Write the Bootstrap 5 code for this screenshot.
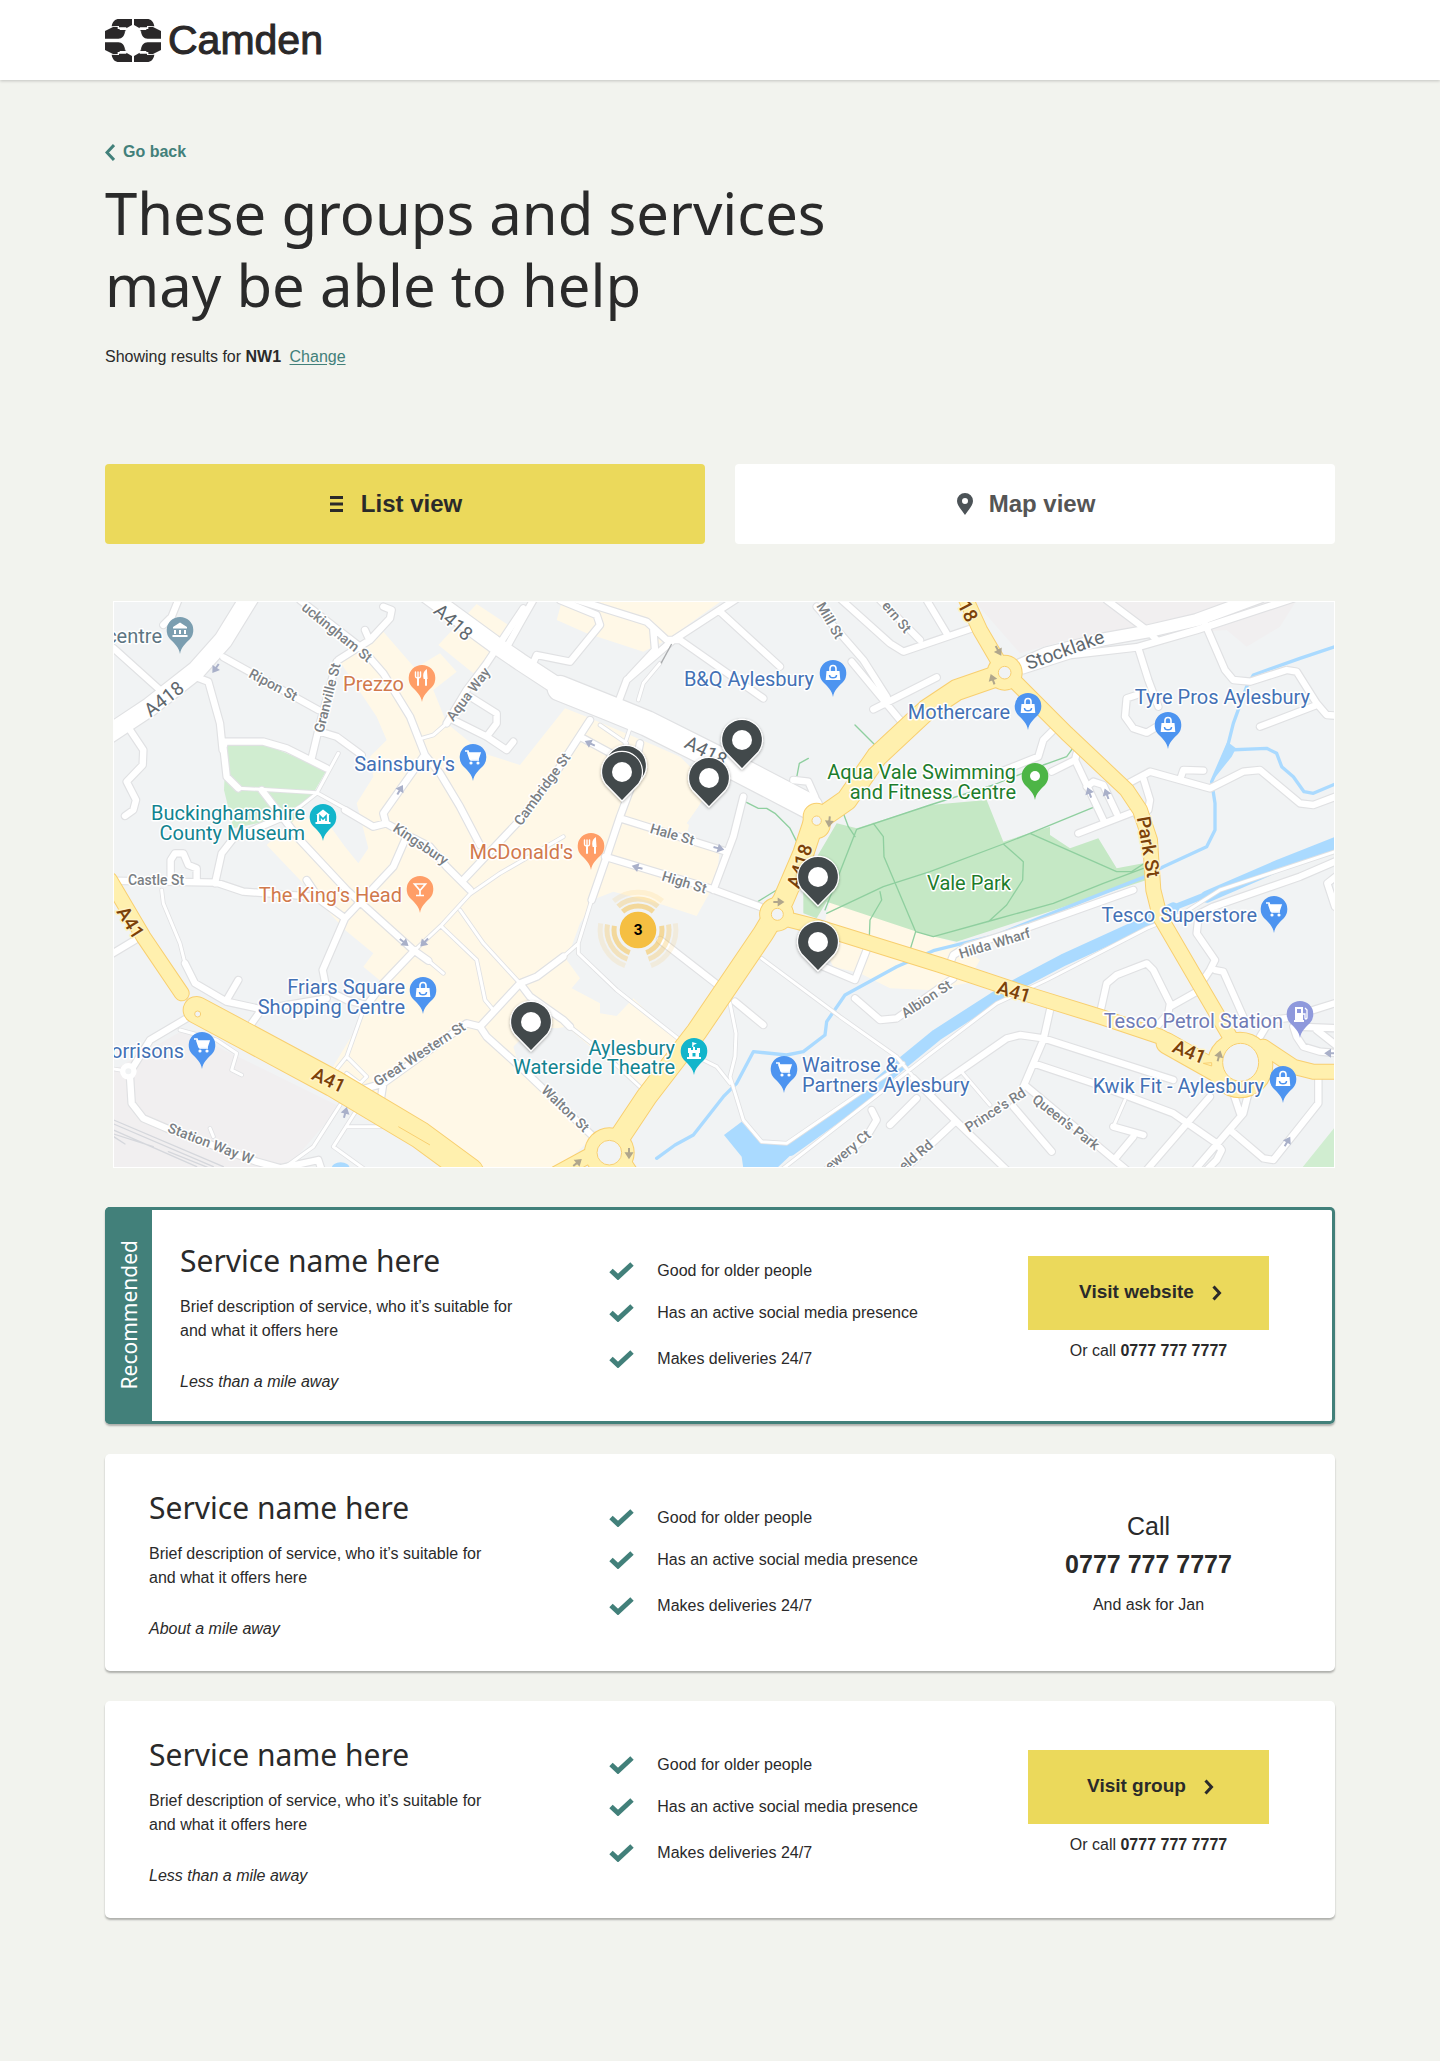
<!DOCTYPE html>
<html lang="en">
<head>
<meta charset="utf-8">
<meta name="viewport" content="width=device-width, initial-scale=1">
<title>Camden – groups and services</title>
<link rel="stylesheet" href="https://cdn.jsdelivr.net/npm/bootstrap@5.3.0/dist/css/bootstrap.min.css">
<style>
:root{--ink:#2a2a2a;--teal:#42807a;--sun:#ebd95b;--paper:#f2f3ee}
body{background:var(--paper);color:var(--ink);font-family:"Liberation Sans",Arial,sans-serif;font-size:16px;line-height:24px}
.container{max-width:1254px}
.site-head{height:80px;box-shadow:0 1px 3px rgba(0,0,0,.2)}
.brand{color:#2a2829;font-size:41px;line-height:48px;gap:7px;-webkit-text-stroke:1px #2a2829}
.brand svg{width:56px;height:43px}
.display-font{font-family:"Noto Sans","Open Sans",sans-serif;font-weight:400}
.page-body{padding-top:60px;padding-bottom:140px}
.back-link{color:var(--teal)}
.page-title{font-size:58px;line-height:72px;margin-top:9px}
.change-link{color:var(--teal);text-underline-offset:2px}
.view-tabs{gap:30px;margin-top:95px}
.view-tab{height:80px;border:0;border-radius:4px;font-size:24px;font-weight:700;padding-right:30px;background:#fff;color:#555}
.view-tab.active,.view-tab:hover,.view-tab.active:hover{background:var(--sun);color:var(--ink)}
.view-tab:not(.active):hover{background:#fff;color:#555}
.map-wrap{margin:57px 0 39px 8px;border:1px solid #fff}
.map-wrap svg{display:block;width:100%;height:auto;font-family:Roboto,sans-serif}
.results{gap:30px}
.service{background:#fff;border-radius:5px;box-shadow:0 2px 2px rgba(0,0,0,.28)}
.service.recommended{box-shadow:inset 0 0 0 3px var(--teal),0 2px 2px rgba(0,0,0,.28)}
.band{flex:0 0 47px;background:var(--teal);color:#fff;font-size:21px;border-radius:5px 0 0 5px}
.band span{writing-mode:vertical-rl;transform:rotate(180deg)}
.about{padding:36px 20px 30px 44px}
.recommended .about{padding-left:28px}
.service-name{font-size:30px;line-height:36px;margin-bottom:16px}
.blurb{margin-bottom:27px;max-width:350px}
.ticks{gap:18px;padding:52px 20px 0 0}
.ticks li{gap:23px}
.ticks li:last-child{margin-top:4px}
.ticks svg{width:25px;height:18px;flex:none}
.action{padding:49px 44px 20px}
.visit{height:74px;border-radius:0;background:var(--sun);color:var(--ink);font-size:19px;font-weight:700;gap:18px;padding-left:16px}
.visit:hover{background:#e0cd48;color:var(--ink)}
.or-call{margin:9px 0 0}
.call-lines{font-size:25px;line-height:38px;padding-top:4px;margin-bottom:10px}
@media(min-width:992px){
 .lead-col{flex:0 0 41%}
 .action{flex:0 0 241px;padding:49px 0 0;margin-right:66px}
}
/* map */
.rd{fill:none;stroke-linecap:round;stroke-linejoin:round}
.st{font-size:14px;font-weight:500;fill:#7b7f84;text-anchor:middle}
.rn{font-size:19px;fill:#5f686e;text-anchor:middle}
.yn{font-size:19px;font-weight:500;fill:#7b4109;text-anchor:middle}
.poi{font-size:20px}
.halo text{paint-order:stroke;stroke:#fff;stroke-width:3px;stroke-linejoin:round}
.halo .yn{stroke:#fff3c4}
.park-label{fill:#1d7d2c}.shop{fill:#4371b5}.eat{fill:#d1794c}.culture{fill:#128490}.civic{fill:#5d7582}.fuel{fill:#6f7bb5}
</style>
<script src="https://cdn.jsdelivr.net/npm/bootstrap@5.3.0/dist/js/bootstrap.bundle.min.js"></script>
</head>
<body>
<svg width="0" height="0" class="position-absolute" aria-hidden="true">
 <defs>
  <symbol id="tick" viewBox="0 0 25 18"><path d="M2 8.500l7 6.500L23 2" fill="none" stroke="#42807a" stroke-width="5"/></symbol>
  <symbol id="chev" viewBox="0 0 10 16"><path d="M1.500 1.500L7.500 8l-6 6.500" fill="none" stroke="currentColor" stroke-width="3"/></symbol>
  <g id="hand"><path d="M20 22C22 8 30 0 42 0H81V18L64 28V25H42V21Z"/><path d="M24 24H38V30H44V33H64L58 37H62V34H60V38C58 50 52 59 40 59H0V36Z"/></g>
 </defs>
</svg>

<header class="site-head bg-white">
 <div class="container h-100 d-flex align-items-center">
  <a href="#" class="brand d-flex align-items-center text-decoration-none">
   <svg viewBox="0 0 168 129" fill="#2a2829" aria-hidden="true"><use href="#hand"/><use href="#hand" transform="matrix(-1 0 0 1 168 0)"/><use href="#hand" transform="matrix(1 0 0 -1 0 129)"/><use href="#hand" transform="matrix(-1 0 0 -1 168 129)"/></svg>
   <span>Camden</span>
  </a>
 </div>
</header>

<main class="container page-body">
 <a href="#" class="back-link d-inline-flex align-items-center gap-2 fw-bold text-decoration-none"><svg width="10" height="17" viewBox="0 0 10 17" aria-hidden="true"><path d="M9 1L2 8.500 9 16" fill="none" stroke="currentColor" stroke-width="3"/></svg>Go back</a>
 <h1 class="page-title display-font mb-0">These groups and services<br>may be able to help</h1>
 <p class="mt-4 mb-0">Showing results for <strong>NW1</strong> <a href="#" class="change-link ms-1">Change</a></p>

 <div class="view-tabs d-flex">
  <button type="button" class="view-tab active btn flex-fill w-50 d-flex align-items-center justify-content-center"><svg class="me-3" width="15" height="16" viewBox="0 0 15 16" aria-hidden="true"><path d="M0 1.500h13M0 8h13M0 14.500h13" stroke="currentColor" stroke-width="3"/></svg>List view</button>
  <button type="button" class="view-tab btn flex-fill w-50 d-flex align-items-center justify-content-center"><svg class="me-3" width="16" height="22" viewBox="0 0 16 22" aria-hidden="true"><path fill="#4c5357" fill-rule="evenodd" d="M8 0a8 8 0 0 1 8 8c0 5-5 9-8 14C5 17 0 13 0 8a8 8 0 0 1 8-8zm0 5a3 3 0 1 0 0 6 3 3 0 0 0 0-6z"/></svg>Map view</button>
 </div>

 <div class="map-wrap">
 <svg viewBox="114 602 1220 565" role="img" aria-label="Map of services in Aylesbury">
  <defs>
   <path id="poi-pin" d="M0 24C-1 17-6 13-10 9A13.300 13.300 0 1 1 10 9C6 13 1 17 0 24Z"/>
   <g id="cart" fill="none" stroke="#fff" stroke-width="1.600"><path fill="#fff" d="M-5-4H7L5 2H-3Z"/><path d="M-8-6h3l3 9h8"/><circle cx="-2" cy="6" r=".8"/><circle cx="5" cy="6" r=".8"/></g>
   <g id="bag"><path fill="#fff" d="M-6.500-2h13l.8 9h-14.600z"/><path d="M-3-2v-2.500a3 3 0 0 1 6 0V-2" fill="none" stroke="#fff" stroke-width="1.600"/><path d="M-3.500 2a3.500 2.800 0 0 0 7 0" fill="none" stroke="#4d94f0" stroke-width="1.500"/></g>
   <g id="fork" stroke="#fff" stroke-width="2" fill="none" stroke-linecap="round"><path d="M-4 0V7M4 0V7"/><path d="M-6.500-6v4q0 2 2.500 2t2.500-2v-4M-4-6v5" stroke-width="1.400"/><path d="M4-7q-2.500 2-1.500 7h2z" fill="#fff"/></g>
   <g id="temple" fill="#fff"><path d="M-7-3L0-7.500 7-3v1.500H-7zM-6 0h2v4h-2zM-1 0h2v4h-2zM4 0h2v4h-2zM-7.500 5h15v2h-15z"/></g>
   <g id="spot"><path d="M0 29L-16.500 12A20.500 20.500 0 1 1 16.500 12Z" fill="#42484b" stroke="#fff" stroke-width="1.200"/><circle r="10" fill="#fff"/></g>
   <path id="way" d="M-16 0H6M0-8L12 0 0 8Z" stroke="currentColor" fill="currentColor" stroke-width="6"/>
   <filter id="drop" x="-30%" y="-30%" width="160%" height="170%"><feDropShadow dx="0" dy="1" stdDeviation="1.500" flood-opacity=".35"/></filter>

   <g id="lanes">
    <path d="M235 30L215 80 190 105M41 175L180 300M370 202L655 360M710 215L660 400 635 505M660 425L710 440 785 495M600 30L780 170 850 250 930 380 975 495M970 500L850 670 858 700 820 710 735 660M850 50L875 60 870 85 810 150 715 210M795 120L808 150M975 495L1020 550 1080 650 1140 765M290 262L325 275 360 400 368 480 375 455 490 455 560 475 680 535M370 470L380 560 415 595M485 600L600 750 740 900 940 1080 985 1112M90 420L130 480 128 525 80 575 108 630 100 660 75 678M35 872L350 878 430 905 640 920M345 880L365 790 400 745 540 685M212 870L212 810 225 790 250 790 265 825 290 835 290 870M858 700L930 740 990 770 1040 830 1110 900M915 750L880 830 735 985 668 1140 680 1200 740 1230 800 1245M620 870L660 930 735 985M945 1080L850 1180 790 1260M1270 55L1160 220 1100 300 1040 400"/>
    <path d="M1060 390L1160 440 1220 480 1240 455M1110 320L1190 370 1190 400 1160 440M1470 390L1360 560 1260 690 1090 870M1620 460L1590 600 1560 680 1520 800 1475 930M1390 1100L1310 1160 1260 1180 1140 1310 1100 1300 850 1480 780 1500M850 1480L842 1530M1140 1310L1160 1340 1260 1430 1480 1640M1260 1180L1290 1220 1390 1290 1410 1310M1560 685L1880 785M1515 800L1830 895 1980 950M1440 440L1560 505M1930 620L1900 740 1840 900M1400 20L1640 95 1700 150 1740 150M1920 20L1720 150 1580 270 1550 350M1660 120L1665 180 1590 260M1860 65L2040 230M1740 150L1990 325M1380 30L1490 75 1500 105 1410 215 1310 195 1290 240M1300 30L1260 100 1210 190M2150 50L2290 210 2360 320M2255 215L2400 390M2320 358L2510 262M2225 30L2370 160 2410 185 2630 110M2340 30L2460 150M2480 30L2540 130"/>
    <path d="M3020 30L3140 120 3170 150M3310 90L3375 240 3400 270 3450 275 3560 240 3590 245 3650 340 3680 375 3720 378M3480 410L3650 345M3115 175L3145 270 3175 350M3110 315L3080 325 3075 380 3100 415 3140 428 3170 410M2860 420L2830 450 2815 500 2690 550M2855 545L2925 510 2930 490M2925 510L3010 690M2960 590L2980 575 3010 585 3050 670M2935 730L3095 668M3085 580L3150 545 3330 595 3430 545 3480 540 3600 640 3640 645 3720 615M3240 570L3250 540 3310 542M3130 565L3150 630 3145 660 3110 675M3290 975L3340 950 3600 860 3720 808M3295 985L3290 1030 3345 1110 3330 1140 3310 1170M3345 1140L3370 1145 3430 1280M3720 850L3682 880 3705 950M2550 1120L2560 1095 2600 1070 2790 1010 3100 900"/>
    <path d="M3000 1270L3020 1180 3050 1155 3140 1120 3160 1140 3210 1240 3205 1270 3170 1310M3210 1250L3290 1205M2850 1260L2830 1350 2770 1490M2740 1550L2855 1685M2490 1510L2540 1470 2720 1345 2760 1335 2830 1345 3220 1470M2800 1420L2980 1480 3220 1570 3350 1660 3365 1680 3350 1710 3320 1740M2440 1465L2570 1595 2720 1740M2560 1600L2400 1750M2450 1525L2370 1605M2780 1490L3080 1740M3040 1610L3130 1635M3100 1640L3050 1700M3330 1520L3140 1740M3445 1510L3430 1570 3280 1745M3390 1620L3490 1705 3520 1710 3655 1540 3655 1460M3400 1510L3420 1570M3580 1310L3590 1340 3610 1370 3660 1385 3720 1390M3480 1340L3510 1290 3600 1280M3640 1260L3720 1235M3590 1310L3720 1315M3650 1320L3720 1375M1680 1050L1860 1190M1905 1235L1990 1305M2170 1130L2265 1170 2300 1080M2265 1225L2340 1290 2390 1285 2560 1165M2315 1560L2330 1590 2300 1640 2180 1740M2080 570L2125 575 2145 620 2155 660M105 1050L30 1095M260 1285L150 1350 100 1430M90 1460L95 1540 130 1585 200 1615 470 1715 560 1740M255 1120L285 1180 380 1235 485 1258 455 1300M380 1230L415 1170M485 1258L680 1225M540 1735L655 1710 665 1740"/>
   </g>
   <g id="alleys">
    <path d="M415 595L480 598 650 608 735 655M540 685L600 650 650 610 715 490M1040 400L1000 435 965 445M790 1260L740 1400 700 1450M945 1080L1025 1005 1110 912 1200 850 1390 740M1475 930L1435 1060 1390 1100M1435 1060L1435 1090 1550 1200 1740 1350M1410 1310L1500 1380 1630 1500M1500 405L1580 460M1590 415L1575 460M1680 220L1630 280 1615 330M2050 1735L2490 1392 2690 1240 2840 1170 3140 1015 3250 970 3360 900 3720 780M2580 1440L2670 1545M3075 1530L3040 1610M1985 1105L2220 1280 2390 1400 2440 1460M1890 1240L1908 1330 1905 1400 1890 1460 1930 1590 1985 1655 2060 1660 2410 1420M1810 1410L1850 1430 1890 1480M185 900L190 940 240 1060 255 1120M240 1320L350 1350 410 1390 395 1440 425 1455M720 1545L640 1670 550 1735M770 1560L700 1670M700 1670L790 1735M740 1610L850 1610M330 1615L340 1640M1080 960L1150 1060 1260 1180M1025 1010L1130 1110 1155 1230 1180 1260M985 1112L1030 1150M740 1400L800 1460 780 1480 740 1450M30 1435L60 1440"/>
   </g>
   <g id="main-roads"><path d="M30 430L150 350 290 240 370 150 450 20" stroke-width="54"/><path d="M975 10L1180 160 1260 215 1390 300" stroke-width="50"/><path d="M1380 295L1530 355 1640 400 1900 530 2130 650" stroke-width="74"/><path d="M2750 230L2840 190 3010 148 3140 125 3290 90 3480 20" stroke-width="36"/><path d="M2770 240L2910 195 3110 172 3290 120 3580 25" stroke-width="20"/></g>
   <g id="main-case"><path d="M30 430L150 350 290 240 370 150 450 20" stroke-width="61"/><path d="M975 10L1180 160 1260 215 1390 300" stroke-width="57"/><path d="M1380 295L1530 355 1640 400 1900 530 2130 650" stroke-width="81"/><path d="M2750 230L2840 190 3010 148 3140 125 3290 90 3480 20" stroke-width="43"/><path d="M2770 240L2910 195 3110 172 3290 120 3580 25" stroke-width="27"/></g>
   <path id="a-slim" d="M30 870L130 1040 245 1210M2590 10L2640 120 2710 240M2720 250L2900 430 3080 600 3120 660 3150 750 3160 900 3180 980 3320 1220 3390 1340M2050 985L2150 1010 2520 1125 2790 1215 3000 1280 3180 1340 3340 1430M3490 1370L3580 1430 3640 1445 3720 1445M1370 1750L1480 1690M1560 1700L1600 1760"/>
   <path id="a-wide" d="M1560 1640L1640 1520 1790 1325 1990 1030 2050 930 2110 790 2140 700 2240 630 2330 500 2480 360 2570 300 2700 255M1528 1688h.1M2030 973h.1M2150 692h.1M2714 248h.1M3200 1360L3360 1450"/>
   <path id="a-broad" d="M290 1260L430 1335 700 1480 960 1635 1110 1745M1500 1685L1560 1690M2020 973h20M2150 680v25M2710 250h10"/>
  </defs>
  <rect x="110" y="598" width="1230" height="575" fill="#f1f3f4"/>
  <g transform="translate(100 590) scale(.333333)">
   <g fill="#f1eff0"><path d="M2620 30H3590L3540 110 3440 170 3380 120 2900 150 2760 190Z"/><path d="M41 1440L250 1320 720 1550 560 1735H41Z"/></g>
   <g fill="#fff8e7">
    <path d="M720 215L850 125 945 235 1020 190 1070 245 1000 300 1040 400 1150 490 1260 525 1395 355 1460 380 1660 465 1740 500 1830 590 1795 650 1760 700 1860 770 1850 870 1790 978 1690 945 1540 905 1490 925 1440 1000 1400 1110 1440 1165 1415 1195 1500 1240 1500 1270 1550 1278 1600 1225 1730 1350 1640 1500 1500 1620 1380 1735H1150L690 1445 850 1180 790 1130 820 1090 735 1020 600 870 500 765 580 690 670 680 735 770 775 820 805 775 770 640 820 560 810 500 860 450 830 380Z"/>
    <path d="M1385 36H1860L1700 150 1630 185 1460 130 1370 90ZM1130 42L1225 105 1180 190 1120 250 1015 165ZM2190 935L2570 1060 2640 1110 2600 1180 2490 1200 2370 1195 2280 1150 2200 1130 2160 1050Z"/>
   </g>
   <path d="M1370 1315L1400 1310 1630 1505 1500 1640 1260 1435 1240 1370 1300 1310ZM1830 600L1930 640 1890 780 1760 740 1770 690Z" fill="#f1f3f4"/>
   <path d="M378 465L500 465 680 540 640 610 570 705 520 690 400 715 372 600ZM3702 1615L3605 1735H3720Z" fill="#d0edd0"/>
   <path d="M2210 700L2270 715 2490 645 2660 630 2710 755 2850 710 2850 735 2910 775 2995 745 3050 835 3130 820 3140 870 2570 1055 2480 1035 2180 935 2150 985 2110 970V870Z" fill="#c5e8c5"/>
   <g class="rd" stroke="#8fcf9f" stroke-width="4"><path d="M2265 405L2328 468M2125 505L2098 520 2080 615M1935 635L1975 655 2000 655 2025 670 2070 715 2090 755 2060 860 2030 900 1965 940M2230 670L2245 710 2265 740M2175 960L2270 718 2490 645 2680 585 2830 525 2900 500 2918 475M2320 700L2350 740 2352 800 2390 890 2447 1025 2430 1080M2180 970L2350 890 2490 845 2710 762 2790 730 2980 652M2710 762L2770 815 2768 870 2720 945 2665 995M2790 730L3050 845 3095 845 3130 822M2447 1025L2500 1040 2680 990 2860 940 3010 880 3130 835M2340 905L2345 930 2310 990 2308 1040"/></g>
   <g class="rd" stroke="#aadaff"><path stroke-width="10" d="M1670 1705L1725 1665 1780 1635 1870 1520 1910 1480 1960 1385 2060 1395 2110 1385 2175 1335 2180 1295 2235 1215 2390 1130 2500 1082 2690 1035 3130 862 3190 830 3320 770 3345 720 3345 640 3335 575 3385 460 3400 400 3440 290 3460 255 3600 205 3710 168M3385 480L3500 475 3530 490 3545 530 3580 560 3612 605 3640 610 3710 580"/>
    <path stroke-width="36" d="M2070 1680L2280 1530 2400 1425 2510 1335 2720 1200 2890 1110 3130 1000 3220 955M3320 920L3540 825 3730 750"/><path stroke-width="18" d="M3210 957L3330 910"/></g>
   <path fill="#aadaff" d="M1872 1635L1925 1595 1982 1660 2060 1665 2110 1660 2030 1735H1930L1925 1700ZM3382 455L3408 475 3395 500 3335 575ZM695 1735a27 18 0 0 1 54 0Z"/>
   <g class="rd" stroke="#d5d7dc" stroke-width="4"><path d="M41 1590L370 1730M41 1602L340 1730M41 1620L290 1730M41 1632L160 1670M41 1640L75 1662M205 1685L330 1735"/></g>
   <g class="rd" stroke="#e0e1e3"><use href="#alleys" stroke-width="14"/><use href="#lanes" stroke-width="26"/><use href="#main-case"/></g>
   <g class="rd" stroke="#fff"><use href="#alleys" stroke-width="9"/><use href="#lanes" stroke-width="19"/><use href="#main-roads"/></g>
   <circle cx="85" cy="1444" r="17" fill="#f1f3f4" stroke="#fff" stroke-width="16"/>
   <path d="M1715 162L1683 220" stroke="#a9abad" stroke-width="4"/>
   <g class="rd" stroke="#f8cf70"><use href="#a-slim" stroke-width="48"/><use href="#a-wide" stroke-width="66"/><use href="#a-broad" stroke-width="84"/><circle cx="1528" cy="1688" r="76" fill="#f8cf70" stroke="none"/><circle cx="2030" cy="973" r="52" fill="#f8cf70" stroke="none"/><circle cx="2714" cy="248" r="54" fill="#f8cf70" stroke="none"/><circle cx="3420" cy="1425" r="100" fill="#f8cf70" stroke="none"/></g>
   <g class="rd" stroke="#fff0ae"><use href="#a-slim" stroke-width="42"/><use href="#a-wide" stroke-width="60"/><use href="#a-broad" stroke-width="78"/><circle cx="1528" cy="1688" r="73" fill="#fff0ae" stroke="none"/><circle cx="2030" cy="973" r="49" fill="#fff0ae" stroke="none"/><circle cx="2714" cy="248" r="51" fill="#fff0ae" stroke="none"/><circle cx="3420" cy="1425" r="97" fill="#fff0ae" stroke="none"/></g>
   <g fill="#f1f3f4" stroke="#f8cf70" stroke-width="3"><circle cx="1528" cy="1688" r="37"/><circle cx="2032" cy="973" r="18"/><circle cx="2150" cy="692" r="14"/><circle cx="2714" cy="248" r="19"/><ellipse cx="3422" cy="1417" rx="54" ry="57"/><circle cx="293" cy="1272" r="9"/><path d="M895 1610L990 1665M3310 1420l25 8v-10z" fill="none"/></g>
   <g color="#a9b0c9"><use href="#way" transform="translate(347 235) rotate(125)"/><use href="#way" transform="translate(900 600) rotate(-60)"/><use href="#way" transform="translate(1470 460) rotate(205)"/><use href="#way" transform="translate(1856 775) rotate(15)"/><use href="#way" transform="translate(1612 832) rotate(195)"/><use href="#way" transform="translate(912 1057) rotate(38)"/><use href="#way" transform="translate(973 1057) rotate(135)"/><use href="#way" transform="translate(736 1568) rotate(-75)"/><use href="#way" transform="translate(2968 608) rotate(-110)"/><use href="#way" transform="translate(3020 612) rotate(-110)"/><use href="#way" transform="translate(3562 1655) rotate(-60)"/><use href="#way" transform="translate(3690 1390) rotate(180)"/></g>
   <g color="#b0a68c"><use href="#way" transform="translate(2188 695) rotate(95)"/><use href="#way" transform="translate(2036 936)"/><use href="#way" transform="translate(2695 182) rotate(60)"/><use href="#way" transform="translate(2678 268) rotate(-110)"/><use href="#way" transform="translate(1587 1690) rotate(90)"/><use href="#way" transform="translate(1432 1718) rotate(-40)"/><use href="#way" transform="translate(3357 1398) rotate(-75)"/></g>
  </g>

  <g class="halo">
   <g class="st">
    <text transform="translate(156 885)">Castle St</text>
    <text transform="translate(271 689) rotate(28)">Ripon St</text>
    <text transform="translate(334 636) rotate(39)">uckingham St</text>
    <text transform="translate(332 699) rotate(-76)">Granville St</text>
    <text transform="translate(472 697) rotate(-53)">Aqua Way</text>
    <text transform="translate(418 848) rotate(34)">Kingsbury</text>
    <text transform="translate(546 792) rotate(-54)">Cambridge St</text>
    <text transform="translate(671 839) rotate(16)">Hale St</text>
    <text transform="translate(683 887) rotate(17)">High St</text>
    <text transform="translate(826 623) rotate(60)">Mill St</text>
    <text transform="translate(893 620) rotate(50)">ern St</text>
    <text transform="translate(996 948) rotate(-17)">Hilda Wharf</text>
    <text transform="translate(929 1003) rotate(-33)">Albion St</text>
    <text transform="translate(422 1058) rotate(-33)">Great Western St</text>
    <text transform="translate(209 1148) rotate(21)">Station Way W</text>
    <text transform="translate(562 1112) rotate(44)">Walton St</text>
    <text transform="translate(851 1154) rotate(-40)">ewery Ct</text>
    <text transform="translate(919 1159) rotate(-40)">eld Rd</text>
    <text transform="translate(998 1114) rotate(-33)">Prince's Rd</text>
    <text transform="translate(1063 1126) rotate(38)">Queen's Park</text>
   </g>
   <g class="rn">
    <text transform="translate(168 704) rotate(-38)">A418</text>
    <text transform="translate(449 627) rotate(42)">A418</text>
    <text transform="translate(703 757) rotate(27)">A418</text>
    <text transform="translate(1067 656) rotate(-20)">Stocklake</text>
   </g>
   <g>
    <text class="yn" transform="translate(806 868) rotate(-72)">A418</text>
    <text class="yn" transform="translate(962 614) rotate(62)">18</text>
    <text class="yn" transform="translate(1142 848) rotate(80)">Park St</text>
    <text class="yn" transform="translate(1012 998) rotate(17)">A41</text>
    <text class="yn" transform="translate(1187 1058) rotate(22)">A41</text>
    <text class="yn" transform="translate(326 1086) rotate(25)">A41</text>
    <text class="yn" transform="translate(125 926) rotate(58)">A41</text>
   </g>
   <g class="poi" text-anchor="end">
    <text class="civic" x="162" y="643">centre</text>
    <text class="eat" x="404" y="691">Prezzo</text>
    <text class="shop" x="455" y="771">Sainsbury's</text>
    <text class="culture" x="305" y="820">Buckinghamshire</text><text class="culture" x="305" y="840">County Museum</text>
    <text class="eat" x="573" y="859">McDonald's</text>
    <text class="eat" x="402" y="902">The King's Head</text>
    <text class="shop" x="405" y="994">Friars Square</text><text class="shop" x="405" y="1014">Shopping Centre</text>
    <text class="shop" x="184" y="1058">orrisons</text>
    <text class="shop" x="814" y="686">B&amp;Q Aylesbury</text>
    <text class="shop" x="1010" y="719">Mothercare</text>
    <text class="shop" x="1310" y="704">Tyre Pros Aylesbury</text>
    <text class="park-label" x="1016" y="779">Aqua Vale Swimming</text><text class="park-label" x="1016" y="799">and Fitness Centre</text>
    <text class="park-label" x="1011" y="890">Vale Park</text>
    <text class="culture" x="675" y="1055">Aylesbury</text><text class="culture" x="675" y="1074">Waterside Theatre</text>
    <text class="shop" x="1257" y="922">Tesco Superstore</text>
    <text class="fuel" x="1283" y="1028">Tesco Petrol Station</text>
    <text class="shop" x="1264" y="1093">Kwik Fit - Aylesbury</text>
   </g>
   <g class="poi"><text class="shop" x="802" y="1072">Waitrose &amp;</text><text class="shop" x="802" y="1092">Partners Aylesbury</text></g>
  </g>

  <g fill="#4d94f0">
   <g transform="translate(473 757)"><use href="#poi-pin"/><use href="#cart"/></g>
   <g transform="translate(202 1045)"><use href="#poi-pin"/><use href="#cart"/></g>
   <g transform="translate(784 1069)"><use href="#poi-pin"/><use href="#cart"/></g>
   <g transform="translate(1274 909)"><use href="#poi-pin"/><use href="#cart"/></g>
   <g transform="translate(423 990)"><use href="#poi-pin"/><use href="#bag"/></g>
   <g transform="translate(833 673)"><use href="#poi-pin"/><use href="#bag"/></g>
   <g transform="translate(1028 706)"><use href="#poi-pin"/><use href="#bag"/></g>
   <g transform="translate(1168 725)"><use href="#poi-pin"/><use href="#bag"/></g>
   <g transform="translate(1283 1079)"><use href="#poi-pin"/><use href="#bag"/></g>
  </g>
  <g fill="#ff9e67">
   <g transform="translate(422 678)"><use href="#poi-pin"/><use href="#fork"/></g>
   <g transform="translate(591 846)"><use href="#poi-pin"/><use href="#fork"/></g>
   <g transform="translate(420 889)"><use href="#poi-pin"/><path d="M-5.500-5h11L0 1.500zM0 0v6M-4 6.500h8" fill="none" stroke="#fff" stroke-width="1.700"/></g>
  </g>
  <g transform="translate(180 630)" fill="#7b9eb0"><use href="#poi-pin"/><use href="#temple"/></g>
  <g fill="#12b5cb"><g transform="translate(323 817)"><use href="#poi-pin"/><path d="M-7-2L0-7.500 7-2zM-6-2h12v7h1.500v2h-15V5H-6z" fill="#fff"/><path d="M-3 4v-5l3 3 3-3v5" fill="none" stroke="#12b5cb" stroke-width="1.600"/></g>
   <g transform="translate(694 1051)"><use href="#poi-pin"/><path d="M-6-3h3v2h2v-3h-.8v-5L3-7.500-.5-6v2H1v3h2v-2h3v5H5v4h2v2H-7V6h2V2h-1z" fill="#fff"/><path d="M-1.500 2h3v3.500h-3z"/></g></g>
  <g transform="translate(1035 776)"><use href="#poi-pin" fill="#4db546"/><circle r="5" fill="#fff"/></g>
  <g transform="translate(1300 1014)"><use href="#poi-pin" fill="#8f99dc"/><path d="M-5-7h8v13h1v2H-6V6h1z" fill="#fff"/><path d="M-3-5h4v4h-4z" fill="#8f99dc"/><path d="M5-6l2 2v8q-1.500 2-2 0V0H3" fill="none" stroke="#fff" stroke-width="1.300"/></g>

  <g transform="translate(638 930)">
   <g fill="none" stroke="#f5bd41" stroke-width="5">
    <g id="ring"><path d="M-15.400-18.400A24 24 0 0 1 15.400-18.400" stroke-opacity=".5"/><path d="M-20-23.700A31 31 0 0 1 20-23.700" stroke-opacity=".3"/><path d="M-24.400-29A38 38 0 0 1 24.400-29" stroke-opacity=".13"/></g>
    <use href="#ring" transform="rotate(120)"/><use href="#ring" transform="rotate(240)"/>
   </g>
   <circle r="18.300" fill="#f5bf42"/><text text-anchor="middle" y="5" font-size="14" font-weight="700" font-family="Inter, sans-serif">3</text>
  </g>
  <g filter="url(#drop)">
   <use href="#spot" transform="translate(742 740)"/><use href="#spot" transform="translate(709 778)"/><use href="#spot" transform="translate(626 766)"/><use href="#spot" transform="translate(622 772)"/><use href="#spot" transform="translate(818 877)"/><use href="#spot" transform="translate(818 942)"/><use href="#spot" transform="translate(531 1022)"/>
  </g>
 </svg>
 </div>

 <section class="results d-flex flex-column" aria-label="Results">
  <article class="service recommended d-lg-flex">
   <div class="lead-col d-flex">
    <div class="band display-font d-flex align-items-center justify-content-center"><span>Recommended</span></div>
    <div class="about"><h2 class="service-name display-font">Service name here</h2><p class="blurb">Brief description of service, who it’s suitable for and what it offers here</p><p class="mb-0 fst-italic">Less than a mile away</p></div>
   </div>
   <ul class="ticks list-unstyled d-flex flex-column flex-fill mb-0 ms-3 ms-lg-0">
    <li class="d-flex align-items-center"><svg aria-hidden="true"><use href="#tick"/></svg><span>Good for older people</span></li>
    <li class="d-flex align-items-center"><svg aria-hidden="true"><use href="#tick"/></svg><span>Has an active social media presence</span></li>
    <li class="d-flex align-items-center"><svg aria-hidden="true"><use href="#tick"/></svg><span>Makes deliveries 24/7</span></li>
   </ul>
   <div class="action text-center">
    <a href="#" class="visit btn d-flex align-items-center justify-content-center">Visit website<svg width="10" height="16" aria-hidden="true"><use href="#chev"/></svg></a>
    <p class="or-call">Or call <strong>0777 777 7777</strong></p>
   </div>
  </article>

  <article class="service d-lg-flex">
   <div class="lead-col"><div class="about"><h2 class="service-name display-font">Service name here</h2><p class="blurb">Brief description of service, who it’s suitable for and what it offers here</p><p class="mb-0 fst-italic">About a mile away</p></div></div>
   <ul class="ticks list-unstyled d-flex flex-column flex-fill mb-0 ms-3 ms-lg-0">
    <li class="d-flex align-items-center"><svg aria-hidden="true"><use href="#tick"/></svg><span>Good for older people</span></li>
    <li class="d-flex align-items-center"><svg aria-hidden="true"><use href="#tick"/></svg><span>Has an active social media presence</span></li>
    <li class="d-flex align-items-center"><svg aria-hidden="true"><use href="#tick"/></svg><span>Makes deliveries 24/7</span></li>
   </ul>
   <div class="action text-center">
    <p class="call-lines">Call<br><strong>0777 777 7777</strong></p>
    <p class="mb-0">And ask for Jan</p>
   </div>
  </article>

  <article class="service d-lg-flex">
   <div class="lead-col"><div class="about"><h2 class="service-name display-font">Service name here</h2><p class="blurb">Brief description of service, who it’s suitable for and what it offers here</p><p class="mb-0 fst-italic">Less than a mile away</p></div></div>
   <ul class="ticks list-unstyled d-flex flex-column flex-fill mb-0 ms-3 ms-lg-0">
    <li class="d-flex align-items-center"><svg aria-hidden="true"><use href="#tick"/></svg><span>Good for older people</span></li>
    <li class="d-flex align-items-center"><svg aria-hidden="true"><use href="#tick"/></svg><span>Has an active social media presence</span></li>
    <li class="d-flex align-items-center"><svg aria-hidden="true"><use href="#tick"/></svg><span>Makes deliveries 24/7</span></li>
   </ul>
   <div class="action text-center">
    <a href="#" class="visit btn d-flex align-items-center justify-content-center">Visit group<svg width="10" height="16" aria-hidden="true"><use href="#chev"/></svg></a>
    <p class="or-call">Or call <strong>0777 777 7777</strong></p>
   </div>
  </article>
 </section>
</main>
</body>
</html>
